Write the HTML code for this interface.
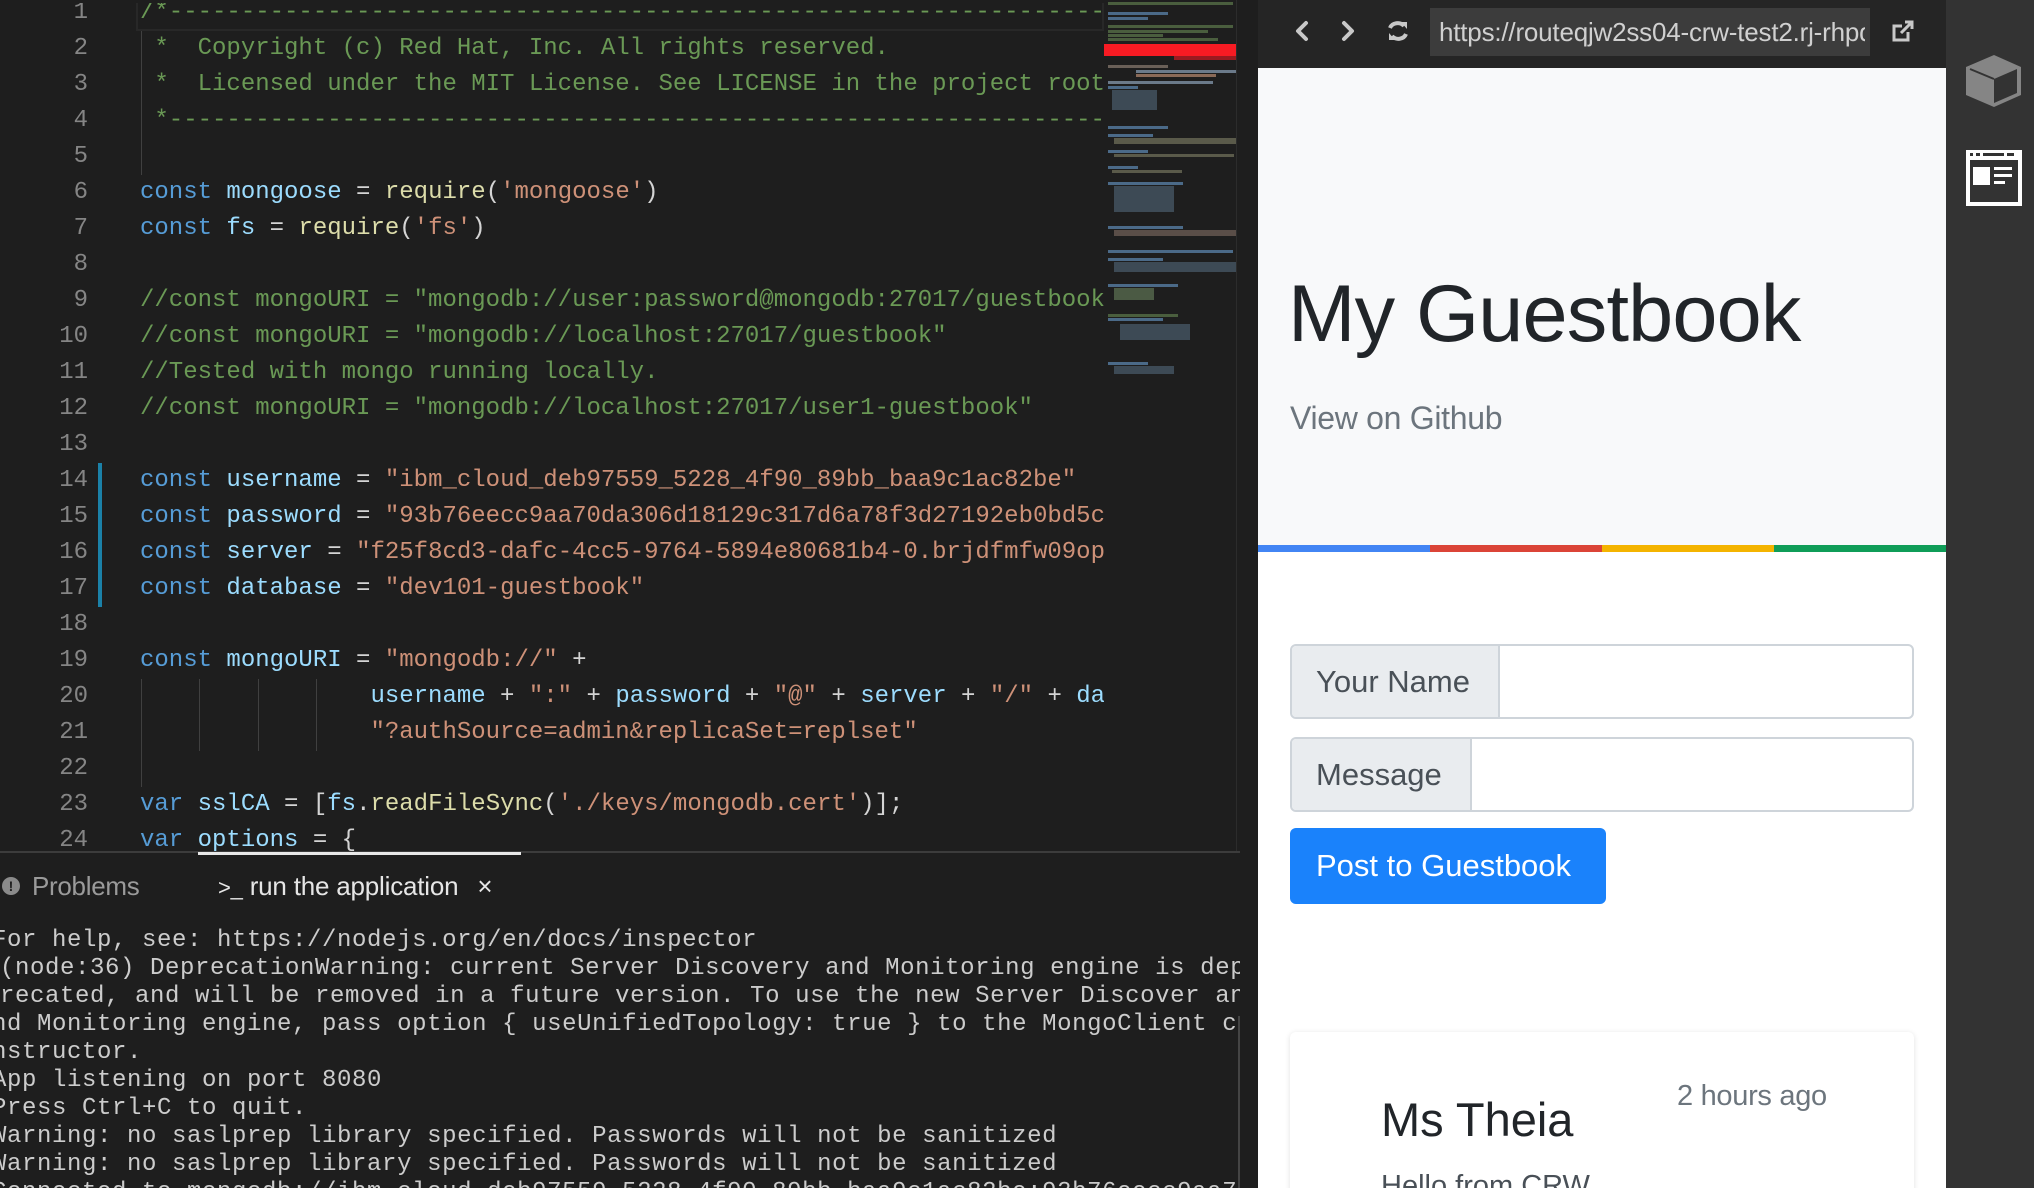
<!DOCTYPE html>
<html><head><meta charset="utf-8"><style>
*{margin:0;padding:0;box-sizing:border-box}
body{width:2034px;height:1188px;background:#1e1e1e;overflow:hidden;position:relative;font-family:"Liberation Sans",sans-serif}
.ed{position:absolute;left:0;top:3px;width:1104px;height:849px;overflow:hidden}
.ln{position:absolute;left:0;width:88px;text-align:right;color:#858585;font:24px/36px "Liberation Mono",monospace}
.cl{position:absolute;left:140px;white-space:pre;font:24px/36px "Liberation Mono",monospace;color:#d4d4d4;letter-spacing:0px}
.k{color:#569cd6}.v{color:#9cdcfe}.f{color:#dcdcaa}.s{color:#ce9178}.c{color:#6a9955}
.g{position:absolute;width:1px;background:#404040}
.mm{position:absolute;left:1104px;top:0;width:133px;height:852px;background:#1e1e1e;border-right:1px solid #2c2c2c;overflow:hidden}
.mm div{position:absolute;height:3px}
.term{position:absolute;left:0;top:0;width:1240px;height:1188px;overflow:hidden}
.tl{position:absolute;left:-8px;white-space:pre;font:24px/28px "Liberation Mono",monospace;color:#cccccc;letter-spacing:0.6px}
</style></head><body>

<div class="ed">
<div style="position:absolute;left:136px;top:-8px;width:968px;height:36px;border:2px solid #282828"></div>
<div class="g" style="left:141px;top:28px;height:144px"></div>
<div class="g" style="left:141px;top:676px;height:108px"></div>
<div class="g" style="left:199px;top:676px;height:72px"></div>
<div class="g" style="left:258px;top:676px;height:72px"></div>
<div class="g" style="left:316px;top:676px;height:72px"></div>
<div style="position:absolute;left:98px;top:460px;width:4px;height:144px;background:#1b81a8"></div>

<div class="ln" style="top:-8px">1</div><div class="cl c" style="top:-8px">/*-----------------------------------------------------------------------</div>
<div class="ln" style="top:28px">2</div><div class="cl c" style="top:28px"> *  Copyright (c) Red Hat, Inc. All rights reserved.</div>
<div class="ln" style="top:64px">3</div><div class="cl c" style="top:64px"> *  Licensed under the MIT License. See LICENSE in the project root for license information.</div>
<div class="ln" style="top:100px">4</div><div class="cl c" style="top:100px"> *-----------------------------------------------------------------------</div>
<div class="ln" style="top:136px">5</div>
<div class="ln" style="top:172px">6</div><div class="cl" style="top:172px"><span class="k">const</span> <span class="v">mongoose</span> = <span class="f">require</span>(<span class="s">'mongoose'</span>)</div>
<div class="ln" style="top:208px">7</div><div class="cl" style="top:208px"><span class="k">const</span> <span class="v">fs</span> = <span class="f">require</span>(<span class="s">'fs'</span>)</div>
<div class="ln" style="top:244px">8</div>
<div class="ln" style="top:280px">9</div><div class="cl c" style="top:280px">//const mongoURI = "mongodb://user:password@mongodb:27017/guestbook"</div>
<div class="ln" style="top:316px">10</div><div class="cl c" style="top:316px">//const mongoURI = "mongodb://localhost:27017/guestbook"</div>
<div class="ln" style="top:352px">11</div><div class="cl c" style="top:352px">//Tested with mongo running locally.</div>
<div class="ln" style="top:388px">12</div><div class="cl c" style="top:388px">//const mongoURI = "mongodb://localhost:27017/user1-guestbook"</div>
<div class="ln" style="top:424px">13</div>
<div class="ln" style="top:460px">14</div><div class="cl" style="top:460px"><span class="k">const</span> <span class="v">username</span> = <span class="s">"ibm_cloud_deb97559_5228_4f90_89bb_baa9c1ac82be"</span></div>
<div class="ln" style="top:496px">15</div><div class="cl" style="top:496px"><span class="k">const</span> <span class="v">password</span> = <span class="s">"93b76eecc9aa70da306d18129c317d6a78f3d27192eb0bd5c3"</span></div>
<div class="ln" style="top:532px">16</div><div class="cl" style="top:532px"><span class="k">const</span> <span class="v">server</span> = <span class="s">"f25f8cd3-dafc-4cc5-9764-5894e80681b4-0.brjdfmfw09op"</span></div>
<div class="ln" style="top:568px">17</div><div class="cl" style="top:568px"><span class="k">const</span> <span class="v">database</span> = <span class="s">"dev101-guestbook"</span></div>
<div class="ln" style="top:604px">18</div>
<div class="ln" style="top:640px">19</div><div class="cl" style="top:640px"><span class="k">const</span> <span class="v">mongoURI</span> = <span class="s">"mongodb://"</span> +</div>
<div class="ln" style="top:676px">20</div><div class="cl" style="top:676px">                <span class="v">username</span> + <span class="s">":"</span> + <span class="v">password</span> + <span class="s">"@"</span> + <span class="v">server</span> + <span class="s">"/"</span> + <span class="v">database</span> +</div>
<div class="ln" style="top:712px">21</div><div class="cl" style="top:712px">                <span class="s">"?authSource=admin&amp;replicaSet=replset"</span></div>
<div class="ln" style="top:748px">22</div>
<div class="ln" style="top:784px">23</div><div class="cl" style="top:784px"><span class="k">var</span> <span class="v">sslCA</span> = [<span class="v">fs</span>.<span class="f">readFileSync</span>(<span class="s">'./keys/mongodb.cert'</span>)];</div>
<div class="ln" style="top:820px">24</div><div class="cl" style="top:820px"><span class="k">var</span> <span class="v">options</span> = {</div>
</div>

<div class="mm">
<div style="left:4px;top:2px;width:125px;background:#4a5e3e"></div>
<div style="left:4px;top:12px;width:60px;background:#4b6a88"></div>
<div style="left:4px;top:17px;width:40px;background:#4b6a88"></div>
<div style="left:4px;top:25px;width:125px;background:#4a5e3e"></div>
<div style="left:4px;top:30px;width:100px;background:#4a5e3e"></div>
<div style="left:4px;top:34px;width:55px;background:#4a5e3e"></div>
<div style="left:4px;top:38px;width:110px;background:#4a5e3e"></div>
<div style="left:0;top:44px;width:133px;height:12px;background:#f71b23"></div>
<div style="left:70px;top:56px;width:63px;height:4px;background:#9a1a20"></div>
<div style="left:4px;top:65px;width:60px;background:#6a6058"></div>
<div style="left:32px;top:70px;width:100px;background:#6b7a8a"></div>
<div style="left:32px;top:74px;width:80px;background:#8a6a58"></div>
<div style="left:4px;top:81px;width:105px;background:#6b7a8a"></div>
<div style="left:4px;top:86px;width:30px;background:#4b6a88"></div>
<div style="left:8px;top:90px;width:45px;height:20px;background:#3d4a55"></div>
<div style="left:4px;top:126px;width:60px;background:#4b6a88"></div>
<div style="left:4px;top:134px;width:45px;background:#4b6a88"></div>
<div style="left:10px;top:138px;width:123px;height:6px;background:#5a5a4a"></div>
<div style="left:4px;top:150px;width:40px;background:#4b6a88"></div>
<div style="left:10px;top:154px;width:120px;background:#5a5a4a"></div>
<div style="left:4px;top:166px;width:30px;background:#4b6a88"></div>
<div style="left:8px;top:170px;width:70px;background:#5a5a4a"></div>
<div style="left:4px;top:182px;width:75px;background:#4b6a88"></div>
<div style="left:10px;top:186px;width:60px;height:26px;background:#3d4a55"></div>
<div style="left:4px;top:226px;width:75px;background:#4b6a88"></div>
<div style="left:10px;top:230px;width:123px;height:6px;background:#5a4e48"></div>
<div style="left:4px;top:250px;width:125px;background:#4b6a88"></div>
<div style="left:4px;top:258px;width:55px;background:#4b6a88"></div>
<div style="left:10px;top:262px;width:123px;height:10px;background:#3d4a55"></div>
<div style="left:4px;top:284px;width:70px;background:#4b6a88"></div>
<div style="left:10px;top:288px;width:40px;height:12px;background:#4b5a44"></div>
<div style="left:4px;top:314px;width:70px;background:#4a5e3e"></div>
<div style="left:4px;top:318px;width:55px;background:#4b6a88"></div>
<div style="left:16px;top:324px;width:70px;height:16px;background:#3d4a55"></div>
<div style="left:4px;top:362px;width:40px;background:#4b6a88"></div>
<div style="left:10px;top:366px;width:60px;height:8px;background:#3d4a55"></div>
</div>

<div class="term">
<div style="position:absolute;left:0;top:851px;width:1258px;height:2px;background:#3c3c3c"></div>
<div style="position:absolute;left:198px;top:852px;width:323px;height:3px;background:#e8e8e8"></div>
<div style="position:absolute;left:2px;top:877px;width:18px;height:18px;border-radius:50%;background:#8a8a8a;color:#1e1e1e;font:bold 14px/18px 'Liberation Sans';text-align:center">!</div>
<div style="position:absolute;left:32px;top:870px;font-size:26px;line-height:32px;color:#9a9a9a;letter-spacing:-0.3px">Problems</div>
<div style="position:absolute;left:218px;top:870px;font-size:26px;line-height:32px;color:#e6e6e6;letter-spacing:-0.2px"><span style="font-size:22px">&gt;_</span> run the application <span style="margin-left:12px;font-size:26px">×</span></div>
<div class="tl" style="top:927px">For help, see: https://nodejs.org/en/docs/inspector</div>
<div class="tl" style="left:0;top:955px">(node:36) DeprecationWarning: current Server Discovery and Monitoring engine is dep</div>
<div class="tl" style="left:0;top:983px">recated, and will be removed in a future version. To use the new Server Discover an</div>
<div class="tl" style="top:1011px">nd Monitoring engine, pass option { useUnifiedTopology: true } to the MongoClient co</div>
<div class="tl" style="top:1039px">nstructor.</div>
<div class="tl" style="top:1067px">App listening on port 8080</div>
<div class="tl" style="top:1095px">Press Ctrl+C to quit.</div>
<div class="tl" style="top:1123px">Warning: no saslprep library specified. Passwords will not be sanitized</div>
<div class="tl" style="top:1151px">Warning: no saslprep library specified. Passwords will not be sanitized</div>
<div class="tl" style="top:1179px">Connected to mongodb://ibm_cloud_deb97559_5228_4f90_89bb_baa9c1ac82be:93b76eecc9aa7</div>
<div style="position:absolute;left:1238px;top:1016px;width:6px;height:172px;background:#444"></div>
</div>

<!-- browser -->
<div style="position:absolute;left:1258px;top:0;width:688px;height:68px;background:#252525"></div>
<svg style="position:absolute;left:1258px;top:0" width="688" height="68">
<path d="M48 23 L40 31 L48 39" fill="none" stroke="#c8c8c8" stroke-width="4" stroke-linecap="round" stroke-linejoin="round"/>
<path d="M86 23 L94 31 L86 39" fill="none" stroke="#c8c8c8" stroke-width="4" stroke-linecap="round" stroke-linejoin="round"/>
<path d="M132 28 A8 7 0 0 1 146 26 M148 34 A8 7 0 0 1 134 36" fill="none" stroke="#c8c8c8" stroke-width="4"/>
<path d="M143 22 L149 22 L149 29 Z M137 40 L131 40 L131 33 Z" fill="#c8c8c8"/>
<rect x="172" y="8" width="440" height="48" fill="#3c3c3c"/>
<path d="M644 26 L636 26 L636 40 L650 40 L650 32" fill="none" stroke="#c8c8c8" stroke-width="3"/>
<path d="M643 33 L653 23 M647 22 L654 22 L654 29" fill="none" stroke="#c8c8c8" stroke-width="3"/>
</svg>
<div style="position:absolute;left:1439px;top:14px;width:426px;height:36px;overflow:hidden;white-space:nowrap;color:#d0d0d0;font-size:26px;line-height:36px;letter-spacing:-0.2px">https://routeqjw2ss04-crw-test2.rj-rhpds</div>

<div style="position:absolute;left:1258px;top:68px;width:688px;height:1120px;background:#fff;overflow:hidden">
<div style="position:absolute;left:0;top:0;width:688px;height:477px;background:#f8f9fa"></div>
<div style="position:absolute;left:0;top:477px;width:172px;height:7px;background:#4285f4"></div>
<div style="position:absolute;left:172px;top:477px;width:172px;height:7px;background:#db4437"></div>
<div style="position:absolute;left:344px;top:477px;width:172px;height:7px;background:#f4b400"></div>
<div style="position:absolute;left:516px;top:477px;width:172px;height:7px;background:#0f9d58"></div>
<div style="position:absolute;left:30px;top:198px;font-size:81px;line-height:96px;color:#212529;letter-spacing:-0.8px">My Guestbook</div>
<div style="position:absolute;left:32px;top:330px;font-size:32px;line-height:40px;color:#6c757d;letter-spacing:-0.3px">View on Github</div>

<div style="position:absolute;left:32px;top:576px;width:624px;height:75px;border:2px solid #ced4da;border-radius:6px;overflow:hidden">
<div style="position:absolute;left:0;top:0;width:208px;height:71px;background:#e9ecef;border-right:2px solid #ced4da;color:#495057;font-size:31px;line-height:71px;padding-left:24px">Your Name</div></div>
<div style="position:absolute;left:32px;top:669px;width:624px;height:75px;border:2px solid #ced4da;border-radius:6px;overflow:hidden">
<div style="position:absolute;left:0;top:0;width:180px;height:71px;background:#e9ecef;border-right:2px solid #ced4da;color:#495057;font-size:31px;line-height:71px;padding-left:24px">Message</div></div>
<div style="position:absolute;left:32px;top:760px;width:316px;height:76px;background:#1a82fb;border-radius:6px;color:#fff;font-size:31px;line-height:76px;padding-left:26px">Post to Guestbook</div>

<div style="position:absolute;left:32px;top:964px;width:624px;height:200px;border-radius:6px;background:#fff;box-shadow:0 1px 6px rgba(0,0,0,0.12)">
<div style="position:absolute;left:91px;top:60px;font-size:47px;line-height:56px;color:#212529">Ms Theia</div>
<div style="position:absolute;left:387px;top:46px;font-size:29px;line-height:36px;color:#6c757d;letter-spacing:-0.3px">2 hours ago</div>
<div style="position:absolute;left:91px;top:136px;font-size:29px;line-height:36px;color:#495057">Hello from CRW</div>
</div>
</div>

<!-- right sidebar -->
<div style="position:absolute;left:1946px;top:0;width:88px;height:1188px;background:#333"></div>
<svg style="position:absolute;left:1960px;top:50px" width="70" height="170">
<path d="M34 5 L61 17 L61 45 L34 57 L6 45 L6 17 Z" fill="#858585"/>
<path d="M34 29 L57 19 L57 43 L34 53 Z" fill="#333"/>
<path d="M10 19 L34 29" stroke="#333" stroke-width="2"/>
<rect x="6" y="100" width="56" height="56" fill="#fff"/>
<rect x="10" y="110" width="48" height="42" fill="#333"/>
<rect x="10" y="103" width="3" height="3" fill="#333"/><rect x="16" y="103" width="4" height="3" fill="#333"/><rect x="23" y="103" width="21" height="3" fill="#333"/><rect x="47" y="103" width="7" height="3" fill="#333"/>
<rect x="13" y="117" width="17" height="18" fill="#fff"/>
<rect x="34" y="117" width="18" height="3" fill="#fff"/><rect x="34" y="124" width="18" height="3" fill="#fff"/><rect x="34" y="131" width="11" height="3" fill="#fff"/>
</svg>
</body></html>
